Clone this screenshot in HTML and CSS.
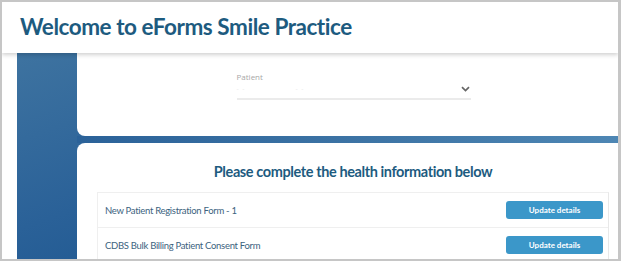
FILE: index.html
```html
<!DOCTYPE html>
<html>
<head>
<meta charset="utf-8">
<link rel="stylesheet" href="styles.css">
</head>
<body>
<div class="frame">
  <header class="header">
    <h1 class="title">Welcome to eForms Smile Practice</h1>
  </header>
  <div class="main">
    <div class="blue">
      <div class="cards">
        <section class="card card-top">
          <div class="field">
            <label class="label">Patient</label>
            <div class="select">
              <span class="ph"><span>- -</span><span>- -</span></span>
              <svg class="chev" width="9" height="6" viewBox="0 0 9 6"><path d="M1 1.2 L4.5 4.6 L8 1.2" fill="none" stroke="#666" stroke-width="1.7"/></svg>
            </div>
          </div>
        </section>
        <section class="card card-bottom">
          <h2 class="heading">Please complete the health information below</h2>
          <div class="list">
            <div class="row">
              <span class="row-text">New Patient Registration Form - 1</span>
              <button class="btn">Update details</button>
            </div>
            <div class="row">
              <span class="row-text">CDBS Bulk Billing Patient Consent Form</span>
              <button class="btn">Update details</button>
            </div>
          </div>
        </section>
      </div>
    </div>
  </div>
</div>
</body>
</html>
```

FILE: styles.css
```css
* { box-sizing: border-box; }
html, body { margin: 0; padding: 0; background: #fff; }
body { font-family: Lato, "Open Sans", sans-serif; }

.frame {
  width: 621px;
  height: 261px;
  border-style: solid;
  border-color: #c6c6c6;
  border-width: 2px 3px 2px 2px;
  overflow: hidden;
  position: relative;
  background: #fff;
}

.header {
  height: 51px;
  background: #fff;
  position: relative;
  z-index: 2;
  box-shadow: 0 2px 4px rgba(0,0,0,0.18);
  display: flex;
  align-items: center;
  padding-left: 18px;
}
.title {
  margin: 0;
  font-size: 22.5px;
  font-weight: 700;
  color: #1d5b7f;
  letter-spacing: -0.45px;
  white-space: nowrap;
  padding-bottom: 2px;
}

.main {
  padding-left: 15px;
  height: 210px;
}
.blue {
  width: 640px;
  height: 210px;
  padding-left: 60px;
  background: linear-gradient(160deg, #3e73a0 0%, #2a6198 40%, #0f4b86 100%);
  position: relative;
}
.blue::before {
  content: "";
  position: absolute;
  left: 60px; right: 0;
  top: 83px; height: 7px;
  background: linear-gradient(90deg, #2b6299 0%, #3d74a5 50%, #5089b6 100%);
}
.cards {
  width: 552px;
  display: flex;
  flex-direction: column;
  gap: 7px;
  position: relative;
}
.card { background: #fff; }
.card-top {
  height: 83px;
  border-radius: 0 0 0 8px;
  display: flex;
  justify-content: center;
  padding-top: 19px;
}
.field { width: 234px; margin-left: 1px; }
.label {
  display: block;
  font-size: 8px;
  color: #a8a8a8;
  font-family: "Open Sans", sans-serif;
  line-height: 10px;
}
.select {
  margin-top: 2px;
  height: 16px;
  border-bottom: 2px solid #ebebeb;
  display: flex;
  align-items: center;
  justify-content: space-between;
  padding-right: 1px;
  padding-bottom: 5px;
}
.ph {
  display: flex;
  gap: 50px;
  font-size: 6px;
  color: #e4e4e4;
  letter-spacing: 1px;
}
.chev { display: block; }

.card-bottom {
  height: 130px;
  border-radius: 8px 0 0 0;
  padding: 0 20px;
}
.heading {
  margin: 0;
  text-align: center;
  font-size: 14.5px;
  font-weight: 700;
  color: #1d5b7f;
  letter-spacing: -0.4px;
  padding-top: 20px;
  height: 49px;
  white-space: nowrap;
}
.list {
  border: 1px solid #efefef;
  border-right: 1px solid #e8e8e8;
}
.row {
  height: 35px;
  display: flex;
  align-items: center;
  justify-content: space-between;
  padding: 0 5px 0 7px;
  border-bottom: 1px solid #efefef;
}
.row-text {
  font-size: 9.5px;
  letter-spacing: -0.3px;
  color: #3c6380;
}
.btn {
  width: 97px;
  height: 18px;
  border: 0;
  border-radius: 3px;
  background: #3b97c9;
  color: #fff;
  font-family: Lato, sans-serif;
  font-weight: 700;
  font-size: 8px;
  padding: 0;
}
```
